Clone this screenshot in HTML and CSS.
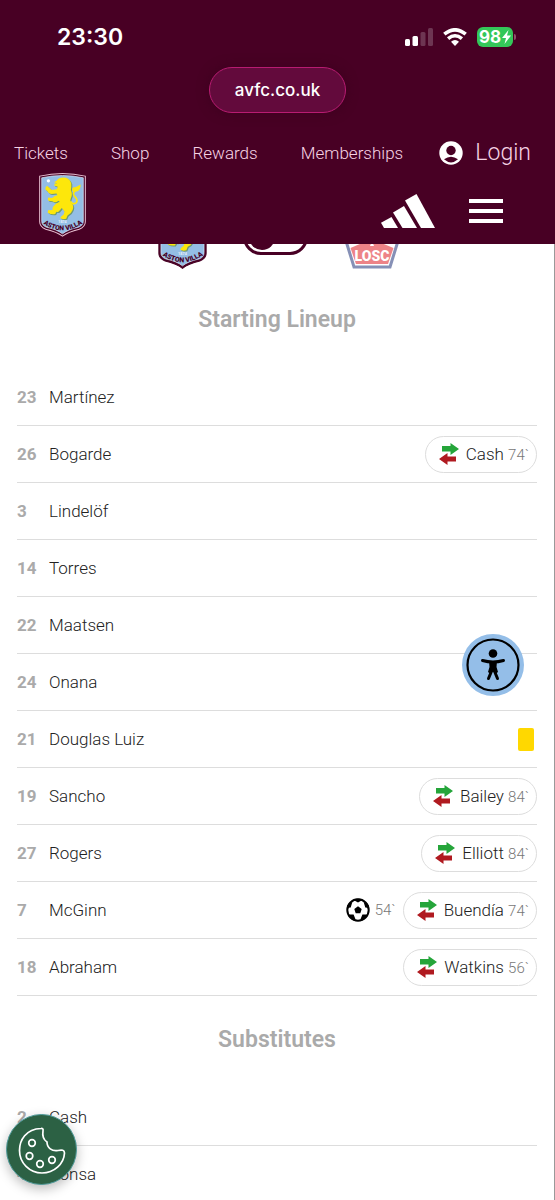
FILE: index.html
```html
<!DOCTYPE html>
<html lang="en">
<head>
<meta charset="utf-8">
<meta name="viewport" content="width=device-width, initial-scale=1">
<title>Aston Villa Lineup</title>
<link rel="stylesheet" href="styles.css">
</head>
<body>
<svg class="defs" aria-hidden="true">
  <symbol id="swap" viewBox="0 0 20 22">
    <path d="M3 3H11.500V0L20 6L11.500 12V8.500H3Z" fill="#25a53a"/>
    <path d="M17 13.500H8.500V10L0 16L8.500 22V18.500H17Z" fill="#b01a20"/>
  </symbol>
</svg>
<div class="page">
  <header class="site-header">
    <div class="status">
      <span class="clock">23:30</span>
      <div class="indicators">
        <svg width="28" height="18" viewBox="0 0 28 18" fill="#fff"><rect y="11" width="5" height="7" rx="1.5"/><rect x="7.500" y="8" width="5.500" height="10" rx="1.500"/><g fill="#6d3552"><rect x="15.500" y="4" width="5" height="14" rx="1.500"/><rect x="23" width="5" height="18" rx="1.500"/></g></svg>
        <svg width="24" height="18" viewBox="0 0 24 18"><g fill="none" stroke="#fff" stroke-width="3.600"><path d="M1.300 6.200Q12-2.600 22.700 6.200"/><path d="M5.100 10.600Q12 4.900 18.900 10.600"/></g><path d="M8 13.700Q12 10.400 16 13.700L12 18Z" fill="#fff"/></svg>
        <span class="battery"><span class="battery-level">98<svg width="9" height="14" viewBox="0 0 9 14" fill="#fff"><path d="M6.500 0L0 8H4L2.500 14L9 5.500H5Z"/></svg></span></span>
      </div>
    </div>
    <div class="address"><button class="url" type="button">avfc.co.uk</button></div>
    <nav class="quick-links">
      <a href="#tickets">Tickets</a>
      <a href="#shop">Shop</a>
      <a href="#rewards">Rewards</a>
      <a href="#memberships">Memberships</a>
      <a class="login" href="#login"><svg width="24" height="24" viewBox="0 0 24 24"><circle cx="12" cy="12" r="11.700" fill="#fff"/><circle cx="12" cy="9.500" r="4.700" fill="#480024"/><path d="M5 18.300Q12 13.200 19 18.300Q12 24.500 5 18.300Z" fill="#480024"/></svg>Login</a>
    </nav>
    <div class="brand-row">
      <a class="home" href="#home" aria-label="Aston Villa home"><svg class="crest" width="47" height="64" viewBox="0 0 140 190"><g id="crest">
        <path d="M2 9Q70-7 138 9V145Q138 160 120 167Q86 175 70 188Q54 175 20 167Q2 160 2 145Z" fill="#480024" stroke="currentColor" stroke-width="3"/>
        <path d="M8 14Q70 0 132 14V143Q132 156 118 161Q86 168 70 181Q54 168 22 161Q8 156 8 143Z" fill="#94bee5" stroke="#dbe6f5" stroke-width="2"/>
        <path transform="translate(3 3)" fill="#6f9a72" d="M53 22Q58 13 72 13Q91 13 96 30Q97 41 95 50Q101 63 95 75Q91 84 97 90Q105 97 100 110Q96 121 85 126L81 136Q70 139 63 134Q67 126 73 124L76 114L68 104L62 111Q58 118 52 115L48 122Q36 124 26 118L27 111L40 110L41 102Q49 89 62 86L58 82Q48 91 40 84L28 82Q24 78 28 73L39 74Q47 67 55 66L52 61L38 62Q28 62 26 55L19 49Q18 42 24 38L30 43L38 50L53 48L56 41L45 37L47 31L54 30L45 27Z"/>
        <path fill="#fde70b" d="M53 22Q58 13 72 13Q91 13 96 30Q97 41 95 50Q101 63 95 75Q91 84 97 90Q105 97 100 110Q96 121 85 126L81 136Q70 139 63 134Q67 126 73 124L76 114L68 104L62 111Q58 118 52 115L48 122Q36 124 26 118L27 111L40 110L41 102Q49 89 62 86L58 82Q48 91 40 84L28 82Q24 78 28 73L39 74Q47 67 55 66L52 61L38 62Q28 62 26 55L19 49Q18 42 24 38L30 43L38 50L53 48L56 41L45 37L47 31L54 30L45 27Z"/>
        <path d="M94 84Q101 96 111 88Q117 80 107 70Q98 61 108 52" fill="none" stroke="#fde70b" stroke-width="5"/>
        <path d="M103 56Q95 51 101 43Q112 42 124 34Q124 49 115 54Z" fill="#fde70b"/>
        <circle cx="28" cy="23" r="5" fill="#fff"/>
        <text class="crest-year" x="70" y="149" text-anchor="middle">1874</text>
        <path id="arc" d="M14 152Q70 190 128 151" fill="none"/>
        <text class="crest-name"><textPath href="#arc" startOffset="50%" text-anchor="middle">ASTON VILLA</textPath></text>
      </g></svg></a>
      <div class="brand-tools">
        <svg width="54" height="34" viewBox="0 0 54 34" fill="#fff"><path d="M0 28.700L10.500 23L17 34H3Z"/><path d="M12 18.500L23 12L36 34H21.500Z"/><path d="M24 6.500L35.500 0L54 34H40Z"/></svg>
        <button class="menu" type="button" aria-label="Menu"><span></span><span></span><span></span></button>
      </div>
    </div>
  </header>
  <main class="content">
    <div class="team-switch">
      <svg class="crest crest-light" width="49" height="66" viewBox="0 0 140 190"><use href="#crest"/></svg>
      <input class="toggle" type="checkbox" role="switch" aria-label="Show away team">
      <svg class="away" width="56" height="66" viewBox="0 0 56 66"><path d="M2 12L28 1L54 12V38L46 64H10L2 38Z" fill="#fff" stroke="#24377c" stroke-width="3"/><path d="M6.500 45L27.500 36L49.500 45L44 61H12Z" fill="#e01e26"/><path d="M28 32L47 40L50 38V13H31Z" fill="#24377c"/><path d="M6 14H24V31L8 41Z" fill="#e01e26"/><path d="M28 38L30 43H26Z" fill="#fff"/><text class="away-name" x="28" y="58" text-anchor="middle">LOSC</text></svg>
    </div>
    <section>
      <h2>Starting Lineup</h2>
      <ul class="players">
        <li><b>23</b><span class="name">Martínez</span></li>
        <li><b>26</b><span class="name">Bogarde</span><span class="sub"><svg width="20" height="22"><use href="#swap"/></svg><span>Cash <small>74`</small></span></span></li>
        <li><b>3</b><span class="name">Lindelöf</span></li>
        <li><b>14</b><span class="name">Torres</span></li>
        <li><b>22</b><span class="name">Maatsen</span></li>
        <li><b>24</b><span class="name">Onana</span></li>
        <li><b>21</b><span class="name">Douglas Luiz</span><span class="yellow-card"></span></li>
        <li><b>19</b><span class="name">Sancho</span><span class="sub"><svg width="20" height="22"><use href="#swap"/></svg><span>Bailey <small>84`</small></span></span></li>
        <li><b>27</b><span class="name">Rogers</span><span class="sub"><svg width="20" height="22"><use href="#swap"/></svg><span>Elliott <small>84`</small></span></span></li>
        <li><b>7</b><span class="name">McGinn</span><span class="goal"><svg width="24" height="24" viewBox="0 0 24 24"><circle cx="12" cy="12" r="10.700" fill="#fff" stroke="#000" stroke-width="2"/><path d="M12 8.200L15.700 10.900L14.300 15.200H9.700L8.300 10.900ZM7.500 2L12 4.600L16.500 2L14 .8H10ZM1 10L4.700 9.600L6.200 4.600L3.700 4.400L1 8ZM23 10L19.300 9.600L17.800 4.600L20.300 4.400L23 8ZM3 16.500L7.600 16.600L9.600 21.500L7.500 22.400L3.500 19ZM21 16.500L16.400 16.600L14.400 21.500L16.500 22.400L20.500 19Z"/></svg><small>54`</small></span><span class="sub"><svg width="20" height="22"><use href="#swap"/></svg><span>Buendía <small>74`</small></span></span></li>
        <li><b>18</b><span class="name">Abraham</span><span class="sub"><svg width="20" height="22"><use href="#swap"/></svg><span>Watkins <small>56`</small></span></span></li>
      </ul>
    </section>
    <section>
      <h2>Substitutes</h2>
      <ul class="players">
        <li><b>2</b><span class="name">Cash</span></li>
        <li><b>4</b><span class="name">Konsa</span></li>
      </ul>
    </section>
  </main>
  <button class="accessibility" type="button" aria-label="Accessibility options"><svg width="62" height="62" viewBox="0 0 62 62"><circle cx="31" cy="31" r="31" fill="#94bee8"/><circle cx="31" cy="31" r="25.500" fill="none" stroke="#000" stroke-width="2.200"/><circle cx="31" cy="19.500" r="4.300"/><path d="M20.500 26.500Q31 29.500 41.500 26.500M30 36L26.500 44.500M32 36L35.500 44.500" fill="none" stroke="#000" stroke-width="3" stroke-linecap="round"/><path d="M27 27H35L34.500 33L36 38L33.500 40L31 37L28.500 40L26 38L27.500 33Z"/></svg></button>
  <button class="cookies" type="button" aria-label="Cookie settings"><svg width="48" height="48" viewBox="0 0 48 48" fill="none" stroke="#fff" stroke-width="1.700" stroke-linejoin="round"><path d="M23 2.500C8 3 1.500 14 1.500 24.500C1.500 37 11.500 47 24 47C36 47 46 38 46.500 27C46.500 24 44 23.500 40 24.500C34 25.500 29 22 29 16C26 14 24 11 25 5C25.500 3 24.500 2.300 23 2.500Z"/><circle cx="14" cy="17" r="3.300"/><circle cx="11.500" cy="30" r="3.300"/><circle cx="22" cy="38" r="3.300"/><circle cx="34" cy="34" r="3.300"/></svg></button>
</div>
</body>
</html>
```
FILE: styles.css
```css
* { box-sizing: border-box; }
body { margin: 0; background: #fff; font-family: Roboto, sans-serif; font-weight: 300; color: #222; }
button { padding: 0; border: 0; background: none; cursor: pointer; }
svg { display: block; flex: none; }
a { color: inherit; text-decoration: none; }
small { font-size: 15px; color: #777; }
.defs { position: absolute; width: 0; height: 0; }
.page { height: 100vh; overflow: hidden; position: relative; }
.crest { overflow: visible; color: #e9bfd2; }
.crest-light { color: #480024; }
.crest-year { font-size: 11px; font-weight: 700; fill: #e6f0fa; }
.crest-name { font-size: 20px; font-weight: 900; fill: #480024; }

.site-header { position: relative; z-index: 2; background: #480024; color: #f6d3e4; padding-bottom: 7px; }
.status { display: flex; justify-content: space-between; align-items: center; padding: 22px 39px 0 57px; height: 52px; color: #fff; font-family: Inter, sans-serif; }
.clock { font-size: 23px; font-weight: 600; }
.indicators { display: flex; align-items: center; gap: 10px; }
.battery { display: flex; align-items: center; gap: 1px; }
.battery::after { content: ""; width: 2px; height: 6px; border-radius: 0 2px 2px 0; background: #8f5069; }
.battery-level { display: flex; align-items: center; justify-content: center; gap: 1px; width: 36px; height: 20px; border-radius: 6px; background: #34c759; font-size: 17px; font-weight: 700; line-height: 20px; }
.address { display: flex; justify-content: center; padding-top: 15px; }
.url { height: 46px; padding: 0 25px; border: 1px solid #b81c72; border-radius: 23px; background: #630a3c; box-shadow: 0 0 12px #3c001e; color: #fff; font: 500 17px Inter, sans-serif; }
.quick-links { display: flex; justify-content: space-between; align-items: center; height: 32px; margin-top: 24px; padding: 0 24px 0 14px; font-size: 17px; line-height: 32px; }
.login { display: flex; align-items: center; gap: 12px; margin-left: -7px; font-size: 23px; }
.brand-row { display: flex; justify-content: space-between; align-items: center; padding: 4px 52px 0 39px; }
.brand-tools { display: flex; align-items: center; gap: 34px; padding-top: 12px; }
.menu { display: flex; flex-direction: column; gap: 6px; width: 34px; }
.menu span { height: 4px; background: #fff; }

.content { border-right: 1px solid #999; padding: 0 17px; min-height: 960px; }
.team-switch { display: flex; justify-content: center; align-items: flex-end; gap: 36px; height: 67px; margin-top: -42px; padding-left: 3px; }
.toggle { appearance: none; display: flex; align-items: center; width: 65px; height: 36px; margin: 0 0 14px; padding: 0 3px; border: 3px solid #480024; border-radius: 18px; background: #fff; }
.toggle::before { content: ""; width: 26px; height: 26px; border-radius: 50%; background: #480024; }
.away { opacity: .55; }
.away-name { font: 900 14px Roboto, sans-serif; fill: #fff; }

h2 { margin: 0; padding: 35px 0 33px; font-size: 23px; line-height: 32px; font-weight: 600; text-align: center; color: #aaa; }
section + section h2 { padding-top: 28px; }
.players { list-style: none; margin: 0; padding: 0; }
.players li { display: flex; align-items: center; height: 57px; border-bottom: 1px solid #ddd; font-size: 17px; }
.players b { width: 32px; font-weight: 700; color: #aaa; }
.name { margin-right: auto; }
.sub { display: flex; align-items: center; gap: 7px; height: 37px; padding: 0 7px 0 13px; border: 1px solid #ddd; border-radius: 19px; }
.goal { display: flex; align-items: center; gap: 5px; margin-right: 7px; }
.yellow-card { width: 16px; height: 23px; margin-right: 3px; border-radius: 2px; background: #ffd800; }

.accessibility { position: absolute; z-index: 3; right: 31px; bottom: 504px; }
.cookies { position: absolute; z-index: 3; left: 6px; bottom: 15px; display: grid; place-items: center; width: 71px; height: 71px; border: 1px solid #4f9a9a; border-radius: 50%; background: #2c6144; box-shadow: 0 4px 12px #0004; }
```
